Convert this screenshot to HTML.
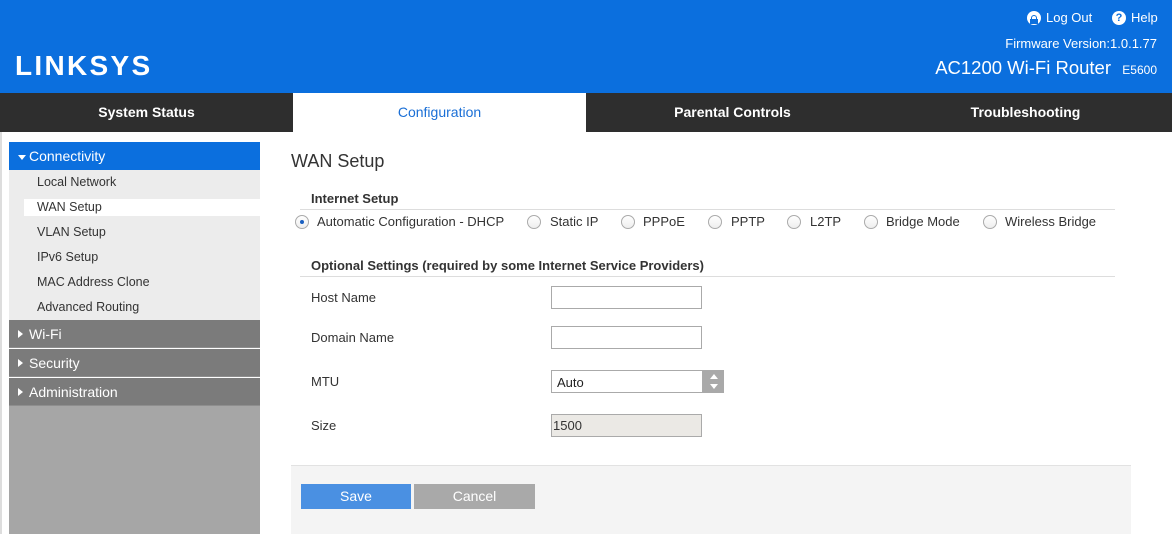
<!DOCTYPE html>
<html><head><style>
*{margin:0;padding:0;box-sizing:border-box}
body{width:1172px;height:534px;overflow:hidden;font-family:"Liberation Sans",Arial,sans-serif;background:#fff;position:relative;font-size:13px;color:#222}
.a{position:absolute}
.hdr{left:0;top:0;width:1172px;height:93px;background:#0b6fde;color:#fff}
.nav{top:93px;height:39px;width:293px;background:#2e2e2e;color:#fff;font-weight:bold;font-size:14px;text-align:center;line-height:39px}
.side{left:9px;width:251px}
.sub{left:37px;font-size:12.5px;color:#333}
.grp{left:9px;width:251px;height:28px;background:#7b7b7b;color:#fff;font-size:14px;line-height:28px;padding-left:20px;border-bottom:1px solid #8e8e8e}
.grp:before{content:"";position:absolute;left:9px;top:10px;border-left:5px solid #fff;border-top:4px solid transparent;border-bottom:4px solid transparent}
.lbl{left:311px;font-size:13px;color:#333}
.in{left:551px;width:151px;height:23px;border:1px solid #aaa;background:#fff}
.r{top:215px;width:14px;height:14px;border:1px solid #aaa;border-radius:50%;background:linear-gradient(#fff,#eee)}
.rt{top:214px;font-size:13px;color:#333}
</style></head><body>
<div class="a hdr">
<div class="a" style="left:15px;top:51px;font-size:28px;line-height:30px;font-weight:bold;letter-spacing:2.3px">LINKSYS</div>
<div class="a" style="left:1027px;top:11px;width:14px;height:14px;border-radius:50%;background:#fff"></div>
<div class="a" style="left:1031px;top:15px;width:6px;height:5px;border:1.5px solid #0b6fde;border-bottom:none;border-radius:3px 3px 0 0"></div>
<div class="a" style="left:1030px;top:19px;width:8px;height:5px;background:#0b6fde"></div>
<div class="a" style="left:1046px;top:10px;font-size:13px">Log Out</div>
<div class="a" style="left:1112px;top:11px;width:14px;height:14px;border-radius:50%;background:#fff;color:#0b6fde;font-size:11px;font-weight:bold;text-align:center;line-height:14px">?</div>
<div class="a" style="left:1131px;top:10px;font-size:13px">Help</div>
<div class="a" style="right:15px;top:36px;font-size:13px">Firmware Version:1.0.1.77</div>
<div class="a" style="right:61px;top:57px;font-size:18.5px">AC1200 Wi-Fi Router</div>
<div class="a" style="right:15px;top:63px;font-size:12px">E5600</div>
</div>
<div class="a nav" style="left:0">System Status</div>
<div class="a nav" style="left:293px;background:#fff;color:#1a6fd6;font-weight:normal">Configuration</div>
<div class="a nav" style="left:586px">Parental Controls</div>
<div class="a nav" style="left:879px">Troubleshooting</div>
<div class="a" style="left:0;top:132px;width:2px;height:402px;background:#ddd"></div>
<div class="a side" style="top:142px;height:28px;background:#0b6fde;color:#fff;font-size:14px;line-height:28px;padding-left:20px">Connectivity</div>
<div class="a" style="left:18px;top:155px;border-top:5px solid #fff;border-left:4px solid transparent;border-right:4px solid transparent"></div>
<div class="a side" style="top:170px;height:150px;background:#ececec"></div>
<div class="a" style="left:24px;top:199px;width:236px;height:17px;background:#fff"></div>
<div class="a sub" style="top:175px">Local Network</div>
<div class="a sub" style="top:200px">WAN Setup</div>
<div class="a sub" style="top:225px">VLAN Setup</div>
<div class="a sub" style="top:250px">IPv6 Setup</div>
<div class="a sub" style="top:275px">MAC Address Clone</div>
<div class="a sub" style="top:300px">Advanced Routing</div>
<div class="a grp" style="top:320px">Wi-Fi</div>
<div class="a grp" style="top:349px">Security</div>
<div class="a grp" style="top:378px">Administration</div>
<div class="a side" style="top:406px;height:128px;background:#a6a6a6"></div>

<div class="a" style="left:291px;top:151px;font-size:18px;color:#333">WAN Setup</div>
<div class="a" style="left:311px;top:191px;font-size:13px;font-weight:bold;color:#333">Internet Setup</div>
<div class="a" style="left:300px;top:209px;width:815px;height:1px;background:#ddd"></div>
<div class="a r" style="left:295px"></div><div class="a" style="left:300px;top:220px;width:4px;height:4px;border-radius:50%;background:#1a5fc0"></div>
<div class="a rt" style="left:317px">Automatic Configuration - DHCP</div>
<div class="a r" style="left:527px"></div><div class="a rt" style="left:550px">Static IP</div>
<div class="a r" style="left:621px"></div><div class="a rt" style="left:643px">PPPoE</div>
<div class="a r" style="left:708px"></div><div class="a rt" style="left:731px">PPTP</div>
<div class="a r" style="left:787px"></div><div class="a rt" style="left:810px">L2TP</div>
<div class="a r" style="left:864px"></div><div class="a rt" style="left:886px">Bridge Mode</div>
<div class="a r" style="left:983px"></div><div class="a rt" style="left:1005px">Wireless Bridge</div>
<div class="a" style="left:311px;top:258px;font-size:13px;font-weight:bold;color:#333">Optional Settings (required by some Internet Service Providers)</div>
<div class="a" style="left:300px;top:276px;width:815px;height:1px;background:#ddd"></div>
<div class="a lbl" style="top:290px">Host Name</div><div class="a in" style="top:286px"></div>
<div class="a lbl" style="top:330px">Domain Name</div><div class="a in" style="top:326px"></div>
<div class="a lbl" style="top:374px">MTU</div>
<div class="a in" style="top:370px;width:152px;font-size:13px;padding:4px 5px">Auto</div>
<div class="a" style="left:703px;top:370px;width:21px;height:23px;background:#a9a9a9"></div>
<div class="a" style="left:710px;top:374px;border-bottom:5px solid #fff;border-left:4px solid transparent;border-right:4px solid transparent"></div>
<div class="a" style="left:710px;top:384px;border-top:5px solid #fff;border-left:4px solid transparent;border-right:4px solid transparent"></div>
<div class="a lbl" style="top:418px">Size</div>
<div class="a in" style="top:414px;background:#ebe9e5;font-size:13px;padding:3px 1px;color:#333">1500</div>
<div class="a" style="left:291px;top:465px;width:840px;height:69px;background:#f4f4f4;border-top:1px solid #e2e2e2"></div>
<div class="a" style="left:301px;top:484px;width:110px;height:25px;background:#4a90e2;color:#fff;font-size:14px;text-align:center;line-height:25px">Save</div>
<div class="a" style="left:414px;top:484px;width:121px;height:25px;background:#a9a9a9;color:#fff;font-size:14px;text-align:center;line-height:25px">Cancel</div>
</body></html>
